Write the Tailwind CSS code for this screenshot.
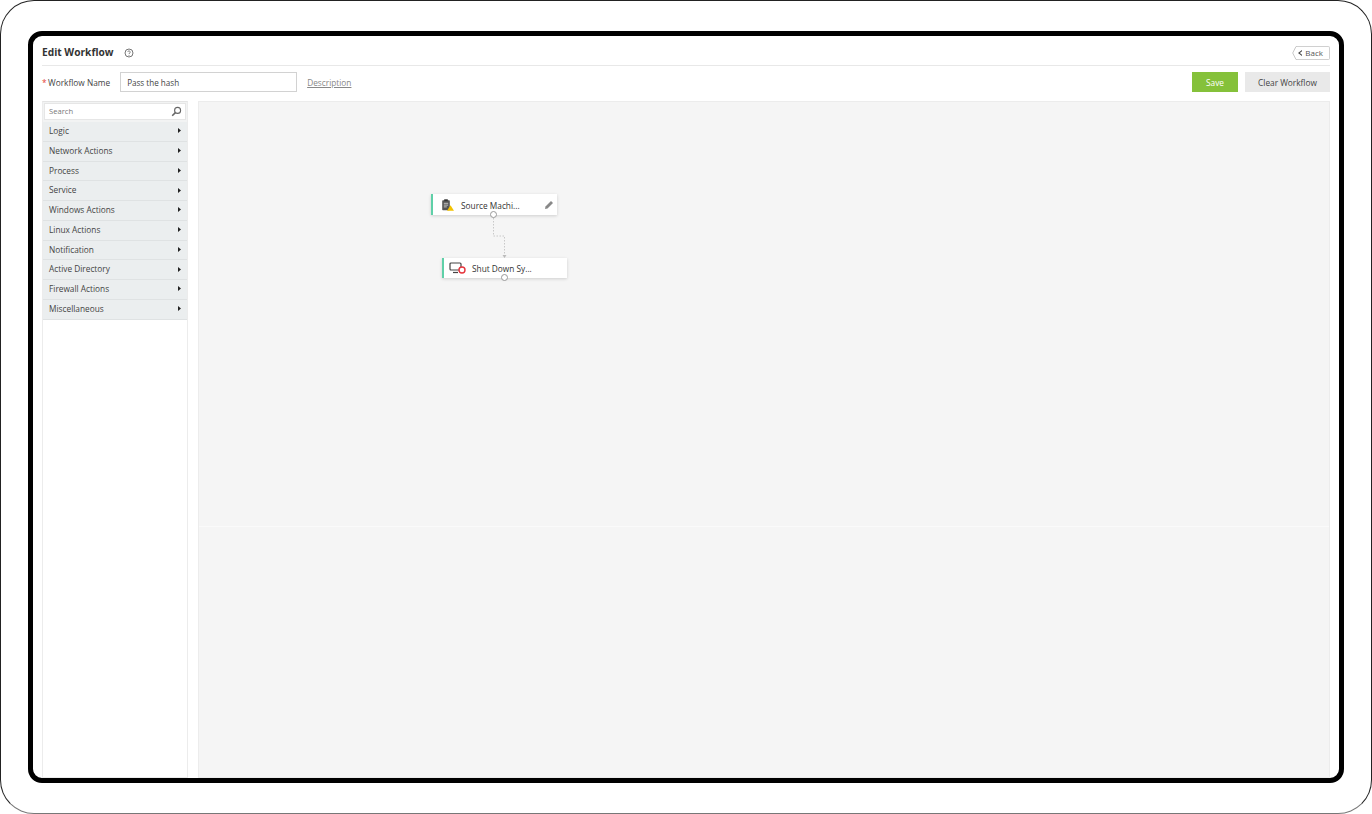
<!DOCTYPE html>
<html>
<head>
<meta charset="utf-8">
<script src="https://cdn.jsdelivr.net/npm/@tailwindcss/browser@4"></script>
</head>
<body class="bg-white">
<div class="w-[1372px] h-[814px] overflow-hidden bg-white box-border border border-[#222] border-b-[#777] rounded-[34px] pt-[30px] pl-[27px]" style="font-family:'Open Sans',sans-serif">
  <div class="w-[1316px] h-[752px] box-border border-[5px] border-black rounded-[14px] overflow-hidden bg-white px-[9px] flex flex-col">
    <div class="h-[30px] shrink-0 flex items-center border-b border-[#e8e8e8] pt-[4px]">
      <span class="text-[10.2px] font-bold text-[#333] leading-none">Edit Workflow</span>
      <svg class="ml-[10px] mt-[1px]" width="10" height="10" viewBox="0 0 10 10" fill="none"><circle cx="5" cy="5" r="4" stroke="#666" stroke-width="0.9"/><path d="M3.7 4C3.8 2.6 6.400 2.700 6.300 4.100 6.200 5 5 5 5 6" stroke="#666" stroke-width="0.8"/><circle cx="5" cy="7.2" r="0.5" fill="#666"/></svg>
      <div class="ml-auto h-[14px] w-[34px] flex items-center justify-end gap-[3px] pr-[6px] border border-[#d0d0d0] border-l-0 bg-white relative text-[8px] text-[#555] rounded-r-[2px]">
        <svg class="absolute left-[-4px] top-[-1px]" width="5" height="14" viewBox="0 0 5 14" fill="none"><path d="M5 .5H4L.7 7l3.300 6.500H5" stroke="#c8c8c8"/></svg>
        <svg width="4" height="6" viewBox="0 0 4 6"><path d="M4 0v1.200L1.800 3 4 4.800V6L0 3z" fill="#444"/></svg>
        <span>Back</span>
      </div>
    </div>
    <div class="h-[35px] shrink-0 flex items-start pt-[6px]">
      <span class="text-[8.3px] leading-[21px] text-[#e53935] mr-[1.500px]">*</span>
      <span class="text-[8.3px] leading-[21px] text-[#444]">Workflow Name</span>
      <div class="ml-[10px] w-[177px] h-[20px] box-border border border-[#d2d2d2] flex items-center pl-[6px] pt-[2px] text-[8.1px] text-[#444]">Pass the hash</div>
      <span class="ml-[10px] text-[8.3px] leading-[21px] text-[#888] underline">Description</span>
      <div class="ml-auto w-[46px] h-[20px] bg-[#85c13a] text-white text-[8.3px] pt-[2px] flex items-center justify-center">Save</div>
      <div class="ml-[7px] w-[85px] h-[20px] bg-[#e9e9e9] text-[#444] text-[8.3px] pt-[2px] flex items-center justify-center">Clear Workflow</div>
    </div>
    <div class="flex-1 flex gap-[10px] min-h-0">
      <div class="w-[146px] shrink-0 box-border border border-[#ececec] border-t-[#e4e4e4] bg-white flex flex-col">
        <div class="h-[20px] shrink-0 bg-[#f2f3f3] pl-[1px] pr-[1px] pt-[1px] pb-[1px]">
          <div class="h-[17px] bg-white border border-[#e6e6e6] flex items-center justify-between pl-[4px] pr-[3px] text-[7.6px] text-[#777]">
            <span>Search</span>
            <svg width="11" height="11" viewBox="0 0 11 11" fill="none"><circle cx="6.600" cy="4.400" r="3" stroke="#666" stroke-width="1.100"/><path d="M4.400 6.600L1.200 9.800" stroke="#666" stroke-width="1.500"/></svg>
          </div>
        </div>
        <div class="flex flex-col text-[8.3px] text-[#444]">
          <div class="h-[19.75px] box-border bg-[#ebeeef] border-b border-[#dfe2e3] flex items-center justify-between pl-[6px] pr-[6px]"><span>Logic</span><svg class="mb-[1px]" width="3" height="5" viewBox="0 0 3 5"><path d="M0 0l3 2.500L0 5z" fill="#222"/></svg></div>
          <div class="h-[19.75px] box-border bg-[#ebeeef] border-b border-[#dfe2e3] flex items-center justify-between pl-[6px] pr-[6px]"><span>Network Actions</span><svg class="mb-[1px]" width="3" height="5" viewBox="0 0 3 5"><path d="M0 0l3 2.500L0 5z" fill="#222"/></svg></div>
          <div class="h-[19.75px] box-border bg-[#ebeeef] border-b border-[#dfe2e3] flex items-center justify-between pl-[6px] pr-[6px]"><span>Process</span><svg class="mb-[1px]" width="3" height="5" viewBox="0 0 3 5"><path d="M0 0l3 2.500L0 5z" fill="#222"/></svg></div>
          <div class="h-[19.75px] box-border bg-[#ebeeef] border-b border-[#dfe2e3] flex items-center justify-between pl-[6px] pr-[6px]"><span>Service</span><svg class="mb-[1px]" width="3" height="5" viewBox="0 0 3 5"><path d="M0 0l3 2.500L0 5z" fill="#222"/></svg></div>
          <div class="h-[19.75px] box-border bg-[#ebeeef] border-b border-[#dfe2e3] flex items-center justify-between pl-[6px] pr-[6px]"><span>Windows Actions</span><svg class="mb-[1px]" width="3" height="5" viewBox="0 0 3 5"><path d="M0 0l3 2.500L0 5z" fill="#222"/></svg></div>
          <div class="h-[19.75px] box-border bg-[#ebeeef] border-b border-[#dfe2e3] flex items-center justify-between pl-[6px] pr-[6px]"><span>Linux Actions</span><svg class="mb-[1px]" width="3" height="5" viewBox="0 0 3 5"><path d="M0 0l3 2.500L0 5z" fill="#222"/></svg></div>
          <div class="h-[19.75px] box-border bg-[#ebeeef] border-b border-[#dfe2e3] flex items-center justify-between pl-[6px] pr-[6px]"><span>Notification</span><svg class="mb-[1px]" width="3" height="5" viewBox="0 0 3 5"><path d="M0 0l3 2.500L0 5z" fill="#222"/></svg></div>
          <div class="h-[19.75px] box-border bg-[#ebeeef] border-b border-[#dfe2e3] flex items-center justify-between pl-[6px] pr-[6px]"><span>Active Directory</span><svg class="mb-[1px]" width="3" height="5" viewBox="0 0 3 5"><path d="M0 0l3 2.500L0 5z" fill="#222"/></svg></div>
          <div class="h-[19.75px] box-border bg-[#ebeeef] border-b border-[#dfe2e3] flex items-center justify-between pl-[6px] pr-[6px]"><span>Firewall Actions</span><svg class="mb-[1px]" width="3" height="5" viewBox="0 0 3 5"><path d="M0 0l3 2.500L0 5z" fill="#222"/></svg></div>
          <div class="h-[19.75px] box-border bg-[#ebeeef] border-b border-[#dfe2e3] flex items-center justify-between pl-[6px] pr-[6px]"><span>Miscellaneous</span><svg class="mb-[1px]" width="3" height="5" viewBox="0 0 3 5"><path d="M0 0l3 2.500L0 5z" fill="#222"/></svg></div>
        </div>
      </div>
      <div class="flex-1 relative box-border border border-[#ececec] bg-[#f5f5f5] flex flex-col">
        <div class="h-[425px] shrink-0 border-b border-[#fafafa]"></div>
        <svg class="absolute left-[290px] top-[113px]" width="20" height="46" viewBox="0 0 20 46" fill="none"><path d="M4.500 0V21H15.500V41" stroke="#c8c8c8" stroke-dasharray="1.500 1.500"/><path d="M13.500 40h4L15.500 43z" fill="#bbb"/></svg>
        <div class="absolute left-[232px] top-[92px] w-[126px] h-[21px] box-border bg-white border-l-2 border-[#5fd0a8] shadow-[0_1px_3px_rgba(0,0,0,0.16)] flex items-center pt-[3px] text-[8.3px] text-[#333]">
          <svg class="ml-[8px] mb-[3px]" width="14" height="12" viewBox="0 0 14 12" fill="none"><rect x="1.200" y="1.200" width="7.600" height="10" rx=".8" fill="#555"/><rect x="3.200" y=".3" width="3.600" height="1.800" fill="#333"/><path d="M2.800 4.300h4.400M2.800 6.100h4.400M2.800 7.900h3" stroke="#eee" stroke-width=".7"/><path d="M9.500 6.200l3.500 5.500H6z" fill="#f2c200"/></svg>
          <span class="ml-[6px]">Source Machi...</span>
          <svg class="ml-auto mr-[3px] mb-[3px]" width="10" height="10" viewBox="0 0 10 10"><path d="M1 9l.5-2.500L7 1l2 2-5.500 5.500z" fill="#888"/></svg>
          <span class="absolute left-[57px] bottom-[-3px] w-[7px] h-[7px] rounded-full bg-white border border-[#999]"></span>
        </div>
        <div class="absolute left-[243px] top-[156px] w-[125px] h-[20px] box-border bg-white border-l-2 border-[#5fd0a8] shadow-[0_1px_3px_rgba(0,0,0,0.16)] flex items-center pt-[2px] text-[8.3px] text-[#333]">
          <svg class="ml-[5px] mb-[2px]" width="17" height="12" viewBox="0 0 17 12" fill="none"><rect x="1" y="1" width="11" height="7" rx="1" stroke="#444" stroke-width="1.200"/><path d="M4 10.500h5" stroke="#444" stroke-width="1.200"/><circle cx="13" cy="8" r="3" fill="#fff" stroke="#e5343c" stroke-width="1.400"/></svg>
          <span class="ml-[6px]">Shut Down Sy...</span>
          <span class="absolute left-[57px] bottom-[-3px] w-[7px] h-[7px] rounded-full bg-white border border-[#999]"></span>
        </div>
      </div>
    </div>
  </div>
</div>
</body>
</html>
